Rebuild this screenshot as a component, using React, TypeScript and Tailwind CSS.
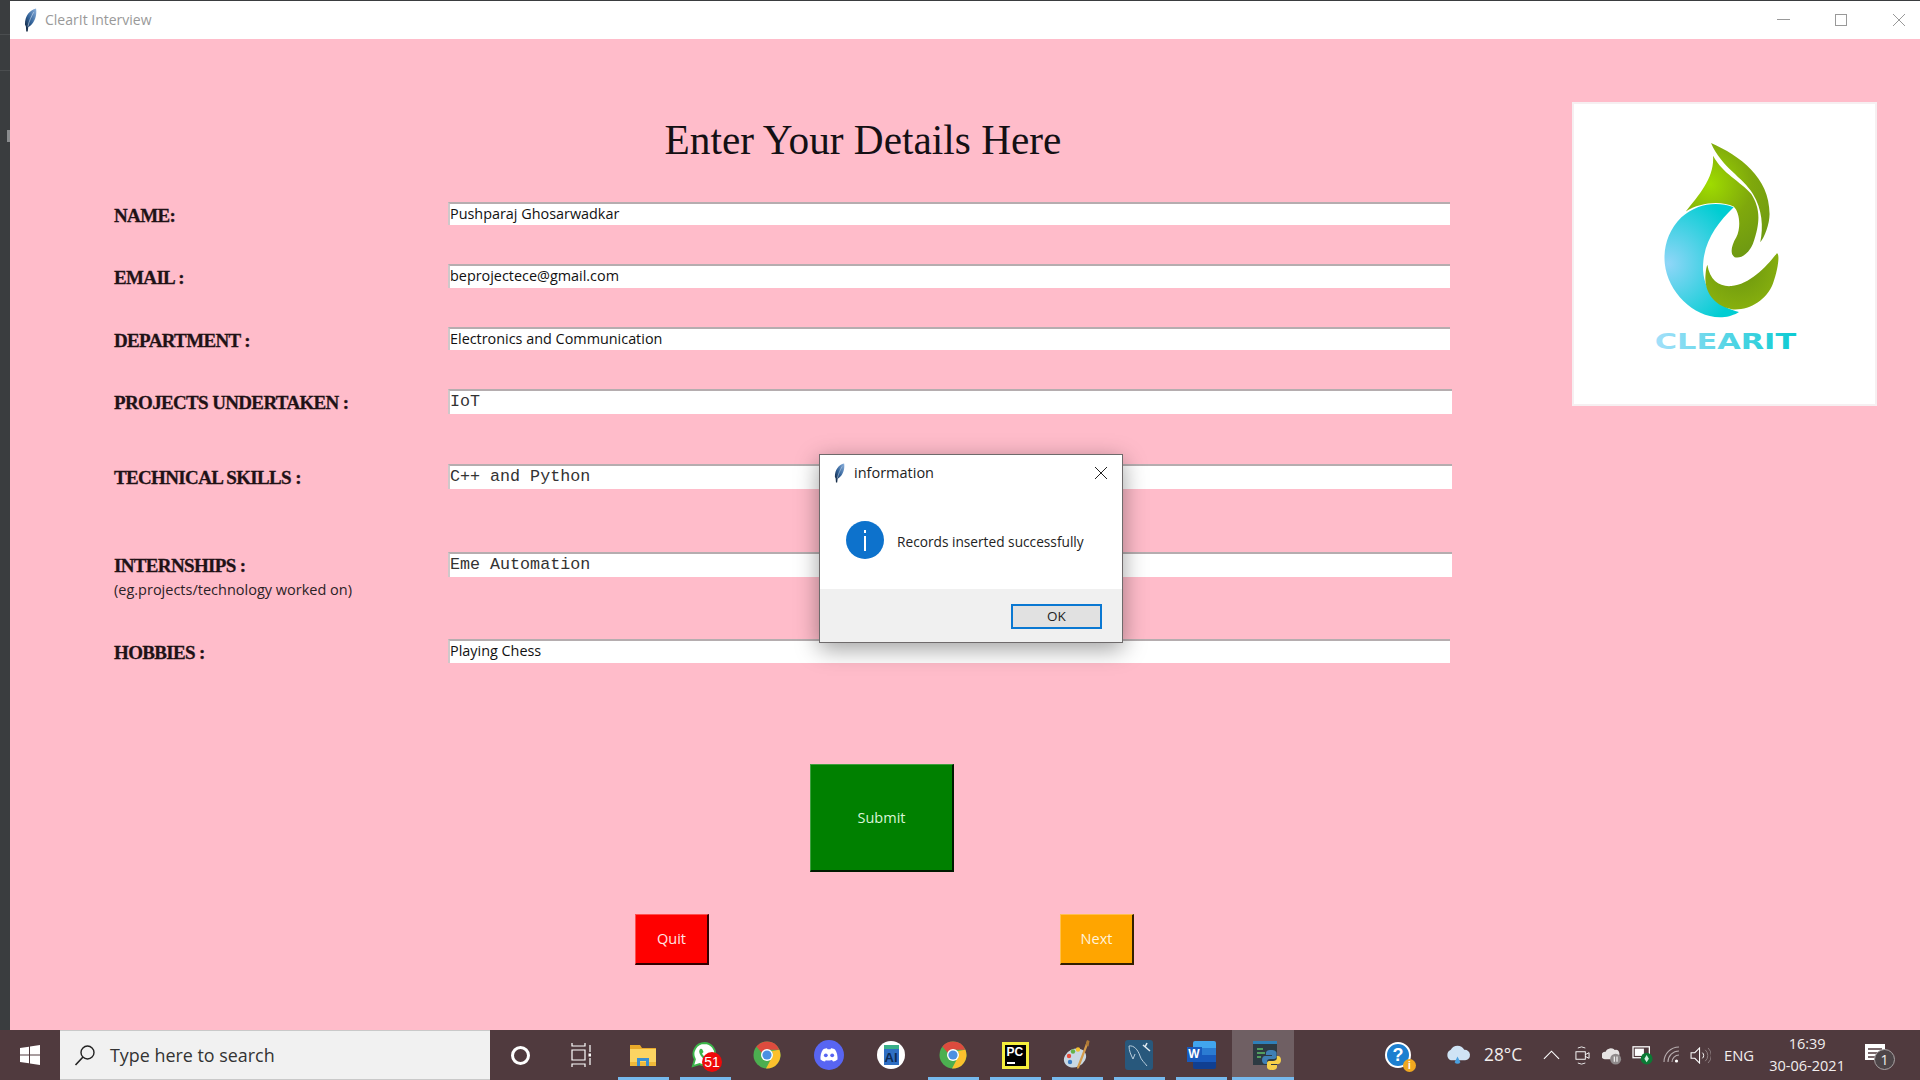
import React from "react";

const sans = "font-['Open_Sans','Noto_Sans',sans-serif]";

function Feather({ className, id }: { className: string; id: string }) {
  return (
    <svg viewBox="0 0 14 26" className={className}>
      <defs>
        <linearGradient id={id} x1="1" y1="0" x2="0" y2="1">
          <stop offset="0" stopColor="#8fb4e0" />
          <stop offset="0.55" stopColor="#2f5f96" />
          <stop offset="1" stopColor="#0d1a2b" />
        </linearGradient>
      </defs>
      <path d="M13 0.5 C6 2 0.8 9 1 18 L2 20 L2.4 25.5 L4 25.5 L4.6 20.5 C11 17.5 14.4 8 13 0.5 Z" fill={`url(#${id})`} />
      <path d="M10.5 4.5 C8 9 5.5 14 4.2 20" stroke="#dbe7f5" strokeWidth="0.6" fill="none" />
    </svg>
  );
}

function ClearItLogo() {
  return (
    <svg viewBox="102 72 905 897" className="w-full h-full">
      <defs>
        <radialGradient id="lg" gradientUnits="userSpaceOnUse" cx="510" cy="310" r="230">
          <stop offset="0" stopColor="#9fdc00" />
          <stop offset="0.55" stopColor="#7fa80c" />
          <stop offset="1" stopColor="#6f9a12" />
        </radialGradient>
        <radialGradient id="lg2" gradientUnits="userSpaceOnUse" cx="600" cy="560" r="150">
          <stop offset="0" stopColor="#6a950f" />
          <stop offset="1" stopColor="#8cb40e" />
        </radialGradient>
        <radialGradient id="lb" gradientUnits="userSpaceOnUse" cx="385" cy="550" r="220">
          <stop offset="0" stopColor="#90d6f8" />
          <stop offset="1" stopColor="#00cdd2" />
        </radialGradient>
        <linearGradient id="lt" gradientUnits="userSpaceOnUse" x1="345" y1="0" x2="770" y2="0">
          <stop offset="0" stopColor="#a4e0fa" />
          <stop offset="1" stopColor="#0ccbd2" />
        </linearGradient>
      </defs>
      <path d="M514 187 C600 225 690 290 690 400 C690 430 675 470 662 485 C672 440 668 385 640 340 C610 290 545 260 514 187 Z" fill="url(#lg)" />
      <path d="M520 225 C550 280 600 300 635 340 C660 380 665 420 640 490 C625 525 600 535 585 530 C570 520 575 495 590 470 C605 440 600 395 582 378 C545 360 480 365 438 393 C480 340 525 290 520 225 Z" fill="url(#lg)" />
      <path d="M582 380 C530 360 470 370 425 410 C385 450 370 500 375 550 C385 640 470 720 555 710 C575 708 590 700 598 695 C540 680 495 640 490 570 C487 490 530 430 582 380 Z" fill="url(#lb)" />
      <path d="M503 553 C510 600 540 620 575 617 C630 612 680 560 712 518 C722 520 715 570 700 610 C680 660 630 690 580 687 C530 680 495 640 497 590 C498 570 500 560 503 553 Z" fill="url(#lg2)" />
      <text x="345" y="807" fontSize="62" fontWeight="700" fontFamily="'DejaVu Sans',sans-serif" textLength="425" lengthAdjust="spacingAndGlyphs" fill="url(#lt)">CLEARIT</text>
    </svg>
  );
}

function Chrome({ id }: { id: string }) {
  return (
    <svg viewBox="0 0 28 28" className="w-[28px] h-[28px]">
      <circle cx="14" cy="14" r="13.5" fill="#4caf50" />
      <path d="M14 .5 A13.5 13.5 0 0 1 26.4 8.8 L14 8.8 A5.5 5.5 0 0 0 8.9 12 L3.4 5.6 A13.5 13.5 0 0 1 14 .5 Z" fill="#dd4b3e" />
      <path d="M26.4 8.8 A13.5 13.5 0 0 1 13 27.5 L18.6 17 A5.5 5.5 0 0 0 18.6 10 Z" fill="#fbc02d" />
      <circle cx="14" cy="14" r="6" fill="#fff" />
      <circle cx="14" cy="14" r="4.6" fill="#4a90e2" data-id={id} />
    </svg>
  );
}

const appIcons: Record<string, React.ReactNode> = {
  explorer: (
    <svg viewBox="0 0 28 26" className="w-[28px] h-[26px]">
      <path d="M1 3 H11 L13 6 H27 V24 H1 Z" fill="#e8a92a" />
      <rect x="1" y="7" width="26" height="17" fill="#fcd462" />
      <rect x="1" y="20" width="26" height="4" fill="#f0b93a" />
      <path d="M8 24 V16 H20 V24 H17 V19 H11 V24 Z" fill="#3a8fd0" />
    </svg>
  ),
  whatsapp: (
    <div className="relative w-[30px] h-[28px] ml-[2px]">
      <svg viewBox="0 0 28 28" className="w-[27px] h-[27px]">
        <path d="M14 2 A11.5 11.5 0 0 0 4 19 L2 26 L9 24 A11.5 11.5 0 1 0 14 2 Z" fill="#fff" stroke="#3cb54a" strokeWidth="2" />
        <path d="M10 8 C8 9 8 12 10 15 C12 18 15 20 18 20 C20 20 21 18 20 17 L17 15.5 L15.5 17 C14 16.5 12 14.5 11.5 13 L13 11.5 L11.5 8.2 Z" fill="#3cb54a" />
      </svg>
      <span className="absolute right-[-1px] bottom-[-3px] w-[20px] h-[20px] rounded-full bg-[#ee0a0a] text-white text-[14px] leading-[20px] text-center font-['Liberation_Sans',sans-serif]">51</span>
    </div>
  ),
  discord: (
    <svg viewBox="0 0 30 30" className="w-[30px] h-[30px]">
      <circle cx="15" cy="15" r="15" fill="#5865f2" />
      <path d="M9 9.5 C11 8.5 12.5 8.3 13 8.3 L13.5 9.3 C14.5 9.1 15.5 9.1 16.5 9.3 L17 8.3 C17.5 8.3 19 8.5 21 9.5 C23 12.5 23.8 16 23.5 19.5 C22 20.7 20.5 21.3 19 21.6 L18 20 C14 21 12 20.5 12 20 L11 21.6 C9.5 21.3 8 20.7 6.5 19.5 C6.2 16 7 12.5 9 9.5 Z" fill="#fff" />
      <circle cx="11.8" cy="15.3" r="1.9" fill="#5865f2" />
      <circle cx="18.2" cy="15.3" r="1.9" fill="#5865f2" />
    </svg>
  ),
  ai: (
    <div className="relative w-[28px] h-[28px] rounded-full bg-white flex items-center justify-center">
      <span className="w-[15px] h-[20px] bg-[#2f6fc4] text-[#0d2a55] text-[13px] leading-[18px] text-center font-bold font-['Liberation_Sans',sans-serif] border-t-[4px] border-t-[#39b08a]">AI</span>
    </div>
  ),
  pycharm: (
    <div className="w-[27px] h-[27px] bg-black border-[3px] border-[#f5ee3c] flex flex-col pl-[2px]">
      <span className="text-white text-[12px] leading-[14px] font-bold font-['Liberation_Sans',sans-serif]">PC</span>
      <span className="w-[8px] h-[2px] bg-white mt-[3px]" />
    </div>
  ),
  paint: (
    <svg viewBox="0 0 28 30" className="w-[28px] h-[30px]">
      <ellipse cx="12" cy="18" rx="11.5" ry="9" fill="#c9d8e4" transform="rotate(-25 12 18)" />
      <circle cx="6" cy="16" r="2.2" fill="#e54c3c" />
      <circle cx="10" cy="11.5" r="2.2" fill="#62b34a" />
      <circle cx="15" cy="9.5" r="2.2" fill="#f2c230" />
      <circle cx="7" cy="22" r="2.2" fill="#3b7cc4" />
      <path d="M24 1 L26 2 L16 28 L14.5 29 L14 27 Z" fill="#d49a4a" />
      <path d="M22.5 5 L25.5 6.5 L26.5 1 L24 0 Z" fill="#b07a36" />
    </svg>
  ),
  mysql: (
    <svg viewBox="0 0 28 30" className="w-[28px] h-[30px]">
      <rect x="0" y="0" width="28" height="30" rx="3" fill="#28587c" />
      <path d="M4 6 C9 5 13 10 15 16 C16 20 20 23 22 26 M4 6 C4 11 6 15 8 19 L10 14" stroke="#b9cedd" strokeWidth="1" fill="none" />
      <path d="M18 5 L25 11 M22 3 L20 7" stroke="#dfe8ef" strokeWidth="1.6" fill="none" />
    </svg>
  ),
  word: (
    <div className="relative w-[29px] h-[28px]">
      <div className="absolute right-0 top-0 w-[23px] h-[28px] rounded-[2px] overflow-hidden flex flex-col">
        <div className="h-[7px] bg-[#41a5ee]" />
        <div className="h-[7px] bg-[#2b7cd3]" />
        <div className="h-[7px] bg-[#185abd]" />
        <div className="h-[7px] bg-[#103f91]" />
      </div>
      <span className="absolute left-0 top-[6px] w-[15px] h-[15px] bg-[#185abd] text-white text-[12px] leading-[15px] text-center font-bold font-['Liberation_Sans',sans-serif]">W</span>
    </div>
  ),
  python: (
    <svg viewBox="0 0 30 32" className="w-[30px] h-[32px] ml-[9px]">
      <rect x="0" y="2" width="24" height="24" fill="#2d3a42" />
      <rect x="0" y="2" width="24" height="3" fill="#2f7fb8" />
      <path d="M4 10 H10 M4 14 H12 M4 18 H8" stroke="#5fbf6a" strokeWidth="1.4" />
      <path d="M18 11 C14 11 13 12.5 13 14 V16 H19 V17 H12 C10 17 9 19 9 21 C9 23 10 25 12 25 H14 V22.5 C14 21 15 20 17 20 H21 C22.5 20 23.5 19 23.5 17.5 V14 C23.5 12.5 22 11 18 11 Z" fill="#3f7fb5" />
      <path d="M19 31 C23 31 24 29.5 24 28 V26 H18 V25 H25 C27 25 28 23 28 21 C28 19 27 17 25 17 H23.8 V19.5 C23.8 21 22 22 20 22 H16 C14.5 22 14 23 14 24.5 V28 C14 29.5 15 31 19 31 Z" fill="#f6d04a" />
    </svg>
  ),
};

function TaskItem({ icon, under, active }: { icon?: React.ReactNode; under?: boolean; active?: boolean }) {
  return (
    <div className={`relative w-[62px] h-[50px] flex items-center justify-center ${active ? "bg-[#6f5f63]" : ""}`}>
      {icon}
      {under && <span className={`absolute bottom-0 h-[3px] bg-[#76b9ed] ${active ? "left-0 right-0" : "left-[6px] right-[5px]"}`} />}
    </div>
  );
}

function Row({ label, sub, value, mono, rowClass, inputClass }: { label: string; sub?: string; value: string; mono?: boolean; rowClass: string; inputClass: string }) {
  return (
    <div className={`flex items-start ${rowClass}`}>
      <div className="w-[334px] shrink-0">
        <div className="font-['Liberation_Serif',serif] font-bold text-[19px] leading-[28px] text-[#1f1216] tracking-[-0.65px] [-webkit-text-stroke:0.3px_#1f1216]">{label}</div>
        {sub && <div className={`${sans} text-[14.5px] leading-[20px] text-[#2b2226]`}>{sub}</div>}
      </div>
      <div className={`${inputClass} bg-white border-t-2 border-l-2 border-t-[#b5adaf] border-l-[#cfc8ca] flex items-center ${mono ? "font-['Liberation_Mono',monospace] text-[16.7px] text-[#333] pb-[1px]" : `${sans} text-[14.4px] text-[#111] pb-[2px]`}`}>
        {value}
      </div>
    </div>
  );
}

function Btn({ text, className }: { text: string; className: string }) {
  return (
    <div className={`${className} ${sans} shrink-0 flex items-center justify-center text-[14.5px] border-t border-l border-r-2 border-b-2 border-r-black/80 border-b-black/80`}>
      {text}
    </div>
  );
}

export default function App() {
  return (
    <div className="relative w-[1920px] h-[1080px] overflow-hidden flex flex-col bg-[#ffbcca]">
      <div className="flex-1 flex min-h-0">
        <div className="w-[10px] shrink-0 bg-[#3a3d3f] flex flex-col">
          <div className="h-[35px] border-b border-b-[#4a4d4f]" />
          <div className="h-[36px] border-b border-b-[#4a4d4f]" />
          <div className="mt-[59px] ml-[7px] w-[3px] h-[12px] bg-[#8a8c8e]" />
        </div>
        <div className="flex-1 min-w-0 flex flex-col">
          <div className="h-[39px] shrink-0 bg-white border-t border-t-[#3a3d3f] flex items-center pl-[14px] pb-[1px]">
            <Feather id="f1" className="w-[13px] h-[24px]" />
            <span className={`${sans} ml-[8px] text-[14px] text-[#999]`}>ClearIt Interview</span>
            <div className="ml-auto mr-[1px] flex items-center gap-[18px]">
              <div className="w-[40px] flex justify-center"><span className="w-[13px] h-[1px] bg-[#999]" /></div>
              <div className="w-[40px] flex justify-center"><span className="w-[12px] h-[12px] border border-[#999]" /></div>
              <div className="w-[40px] flex justify-center">
                <svg viewBox="0 0 12 12" className="w-[12px] h-[12px]"><path d="M0 0 L12 12 M12 0 L0 12" stroke="#999" strokeWidth="1" /></svg>
              </div>
            </div>
          </div>
          <div className="flex-1 flex min-h-0">
            <div className="w-[1562px] shrink-0 flex flex-col">
              <h1 className="pl-[144px] pt-[77px] pb-[1px] text-center font-['Liberation_Serif',serif] text-[41.3px] leading-[48px] text-[#141014]">Enter Your Details Here</h1>
              <div className="pl-[104px] flex flex-col">
                <Row label="NAME:" value="Pushparaj Ghosarwadkar" rowClass="mt-[37px] h-[23px]" inputClass="w-[1002px] h-[23px]" />
                <Row label="EMAIL :" value="beprojectece@gmail.com" rowClass="mt-[39px] h-[24px]" inputClass="w-[1002px] h-[24px]" />
                <Row label="DEPARTMENT :" value="Electronics and Communication" rowClass="mt-[39px] h-[23px]" inputClass="w-[1002px] h-[23px]" />
                <Row label="PROJECTS UNDERTAKEN :" value="IoT" mono rowClass="mt-[39px] h-[25px]" inputClass="w-[1004px] h-[25px]" />
                <Row label="TECHNICAL SKILLS :" value="C++ and Python" mono rowClass="mt-[50px] h-[25px]" inputClass="w-[1004px] h-[25px]" />
                <Row label="INTERNSHIPS :" sub="(eg.projects/technology worked on)" value="Eme Automation" mono rowClass="mt-[63px] h-[25px]" inputClass="w-[1004px] h-[25px]" />
                <Row label="HOBBIES :" value="Playing Chess" rowClass="mt-[62px] h-[24px]" inputClass="w-[1002px] h-[24px]" />
                <div className="mt-[101px] ml-[696px]">
                  <Btn text="Submit" className="w-[144px] h-[108px] bg-[#008000] text-[#d8f5d8] border-t-[#3f9f3f] border-l-[#3f9f3f]" />
                </div>
                <div className="mt-[42px] ml-[521px] flex gap-[351px]">
                  <Btn text="Quit" className="w-[74px] h-[51px] bg-[#ff0000] text-[#ffe5e5] border-t-[#ff5050] border-l-[#ff5050]" />
                  <Btn text="Next" className="w-[74px] h-[51px] bg-[#ffa500] text-[#fff3dd] border-t-[#ffc04d] border-l-[#ffc04d]" />
                </div>
              </div>
            </div>
            <div className="mt-[63px] w-[305px] h-[304px] bg-white border-2 border-[#f6eff1]">
              <ClearItLogo />
            </div>
          </div>
        </div>
      </div>

      <div className="h-[50px] shrink-0 bg-[#503a3e] flex items-center text-white">
        <div className="w-[60px] h-full flex items-center justify-center">
          <svg viewBox="0 0 20 20" className="w-[20px] h-[20px]"><path d="M0 3 L9 1.7 V9.4 H0 Z M10 1.5 L20 0 V9.4 H10 Z M0 10.5 H9 V18.3 L0 17 Z M10 10.5 H20 V20 L10 18.5 Z" fill="#fff" /></svg>
        </div>
        <div className="w-[430px] h-full bg-[#f1f1f1] border-t border-b border-[#c9c9c9] flex items-center pl-[14px]">
          <svg viewBox="0 0 22 22" className="w-[22px] h-[22px]"><circle cx="13.5" cy="8.5" r="6.5" fill="none" stroke="#222" strokeWidth="1.4" /><path d="M9 13 L1.5 21" stroke="#222" strokeWidth="1.6" /></svg>
          <span className={`${sans} ml-[14px] text-[17.9px] text-[#333]`}>Type here to search</span>
        </div>
        <div className="w-[60px] h-full flex items-center justify-center"><span className="w-[19px] h-[19px] rounded-full border-[3px] border-white" /></div>
        <div className="w-[62px] h-full flex items-center justify-center">
          <svg viewBox="0 0 20 24" className="w-[20px] h-[24px]"><path d="M1 0 V3 H14 V0 M1 24 V21 H14 V24 M1 7 H14 V17 H1 Z M19 2 V9 M19 15 V22" stroke="#fff" strokeWidth="1.2" fill="none" /><rect x="17.5" y="10.5" width="3" height="3" fill="#fff" /></svg>
        </div>
        <TaskItem icon={appIcons.explorer} under />
        <TaskItem icon={appIcons.whatsapp} under />
        <TaskItem icon={<Chrome id="c1" />} />
        <TaskItem icon={appIcons.discord} />
        <TaskItem icon={appIcons.ai} />
        <TaskItem icon={<Chrome id="c2" />} under />
        <TaskItem icon={appIcons.pycharm} under />
        <TaskItem icon={appIcons.paint} under />
        <TaskItem icon={appIcons.mysql} under />
        <TaskItem icon={appIcons.word} under />
        <TaskItem icon={appIcons.python} under active />

        <div className="ml-[89px] w-[30px] flex items-center justify-center relative">
          <div className="w-[26px] h-[26px] rounded-full bg-[#1c7fd0] border-2 border-white text-white text-[18px] leading-[22px] font-bold text-center font-['Liberation_Sans',sans-serif]">?</div>
          <span className="absolute right-[-3px] bottom-[-4px] w-[13px] h-[13px] rounded-full bg-[#f0a820] text-white text-[10px] leading-[13px] text-center font-bold font-['Liberation_Sans',sans-serif]">i</span>
        </div>
        <div className="ml-[29px] w-[30px] flex justify-center">
          <svg viewBox="0 0 28 24" className="w-[27px] h-[23px]"><path d="M7 17 A6 6 0 0 1 7 6 A8 8 0 0 1 21 6 A5.5 5.5 0 0 1 22 17 Z" fill="#cfe3f5" /><path d="M14 13 L11 19 A3.5 3.5 0 0 0 17 19 Z" fill="#4aa0e0" /></svg>
        </div>
        <span className={`${sans} ml-[12px] text-[17.3px] w-[36px] text-[#f2eeee] whitespace-nowrap`}>28°C</span>
        <div className="ml-[22px] w-[18px] flex justify-center">
          <svg viewBox="0 0 18 10" className="w-[17px] h-[10px]"><path d="M1 9 L9 1 L17 9" stroke="#fff" strokeWidth="1.2" fill="none" /></svg>
        </div>
        <div className="ml-[14px] w-[16px] flex justify-center">
          <svg viewBox="0 0 16 22" className="w-[15px] h-[21px]"><path d="M3 3 A6 4 0 0 1 11 3 M3 19 A6 4 0 0 0 11 19" stroke="#eee" strokeWidth="1" fill="none" /><rect x="1" y="7" width="10" height="8" fill="none" stroke="#fff" strokeWidth="1" /><path d="M11 10 L15 8 V14 L11 12" stroke="#fff" strokeWidth="1" fill="none" /></svg>
        </div>
        <div className="ml-[11px] w-[22px] flex justify-center">
          <svg viewBox="0 0 22 20" className="w-[20px] h-[19px]"><path d="M3 14 A4 4 0 0 1 4 6 A6 6 0 0 1 14 4 A4 4 0 0 1 16 12 L10 14 Z" fill="#e6e3e3" /><circle cx="15" cy="14" r="6" fill="#8f8a8b" /><path d="M13.5 11 V17 M16.5 11 V17" stroke="#fff" strokeWidth="1.2" /></svg>
        </div>
        <div className="ml-[9px] w-[22px] flex justify-center">
          <svg viewBox="0 0 24 22" className="w-[22px] h-[20px]"><rect x="1" y="2" width="18" height="12" fill="none" stroke="#fff" strokeWidth="1.4" /><rect x="3" y="4" width="10" height="8" fill="#fff" /><circle cx="16" cy="15" r="6.5" fill="#0b7a35" /><path d="M16 11 L18.5 15 L16 19 L13.5 15 Z" fill="#cfeedd" /></svg>
        </div>
        <div className="ml-[9px] w-[18px] flex justify-center">
          <svg viewBox="0 0 18 18" className="w-[18px] h-[18px]"><path d="M1 16 A15 15 0 0 1 16 1 M5 16 A11 11 0 0 1 16 5 M9 16 A7 7 0 0 1 16 9" stroke="#b8aeb0" strokeWidth="1.1" fill="none" /><circle cx="13.5" cy="15" r="1.6" fill="#fff" /></svg>
        </div>
        <div className="ml-[8px] w-[22px] flex justify-center">
          <svg viewBox="0 0 22 18" className="w-[21px] h-[17px]"><path d="M1 6 H5 L10 1 V17 L5 12 H1 Z" fill="none" stroke="#fff" strokeWidth="1.1" /><path d="M13 6 A4 4 0 0 1 13 12" stroke="#fff" fill="none" /><path d="M16 3 A8 8 0 0 1 16 15 M19 1 A11 11 0 0 1 19 17" stroke="#8f8284" fill="none" /></svg>
        </div>
        <span className={`${sans} ml-[13px] text-[14.8px] text-[#f2eeee]`}>ENG</span>
        <div className={`${sans} ml-[14px] w-[78px] flex flex-col items-center text-[14.5px] leading-[22px] text-[#f2eeee]`}>
          <span>16:39</span>
          <span className="whitespace-nowrap">30-06-2021</span>
        </div>
        <div className="relative ml-[19px] w-[20px] h-[30px]">
          <svg viewBox="0 0 20 20" className="w-[20px] h-[20px] mt-[4px]"><path d="M0 0 H20 V16 H0 Z" fill="#fff" /><path d="M3 5 H17 M3 9 H17 M3 13 H12" stroke="#503a3e" strokeWidth="1.3" /></svg>
          <span className={`${sans} absolute left-[9px] top-[9px] w-[21px] h-[21px] rounded-full bg-[#4d4548] border border-[#a9a4a5] text-[14px] leading-[19px] text-center text-[#f2eeee]`}>1</span>
        </div>
      </div>

      <div className="absolute left-[819px] top-[454px] w-[304px] h-[189px] bg-white border border-[#6e6a6b] shadow-[0_6px_22px_rgba(0,0,0,0.38)] flex flex-col">
        <div className="h-[35px] shrink-0 flex items-center pl-[14px]">
          <Feather id="f2" className="w-[11px] h-[20px]" />
          <span className={`${sans} ml-[9px] text-[14.5px] text-[#222]`}>information</span>
          <svg viewBox="0 0 12 12" className="ml-auto mr-[15px] w-[12px] h-[12px]"><path d="M0 0 L12 12 M12 0 L0 12" stroke="#222" strokeWidth="1" /></svg>
        </div>
        <div className="flex-1 flex items-start pl-[26px] pt-[33px]">
          <svg viewBox="0 0 38 38" className="w-[38px] h-[38px] shrink-0 -mt-[2px]"><circle cx="19" cy="19" r="19" fill="#0d72cc" /><rect x="18" y="15" width="2" height="15" fill="#fff" /><rect x="18" y="9" width="2" height="3" fill="#fff" /></svg>
          <span className={`${sans} ml-[13px] mt-[9px] text-[13.7px] text-[#222]`}>Records inserted successfully</span>
        </div>
        <div className="h-[53px] shrink-0 bg-[#f0f0f0] flex items-start justify-end pt-[15px] pr-[20px]">
          <div className={`${sans} w-[91px] h-[25px] bg-[#e1e1e1] border-2 border-[#0a78d2] flex items-center justify-center text-[13.5px] text-[#222]`}>OK</div>
        </div>
      </div>
    </div>
  );
}
